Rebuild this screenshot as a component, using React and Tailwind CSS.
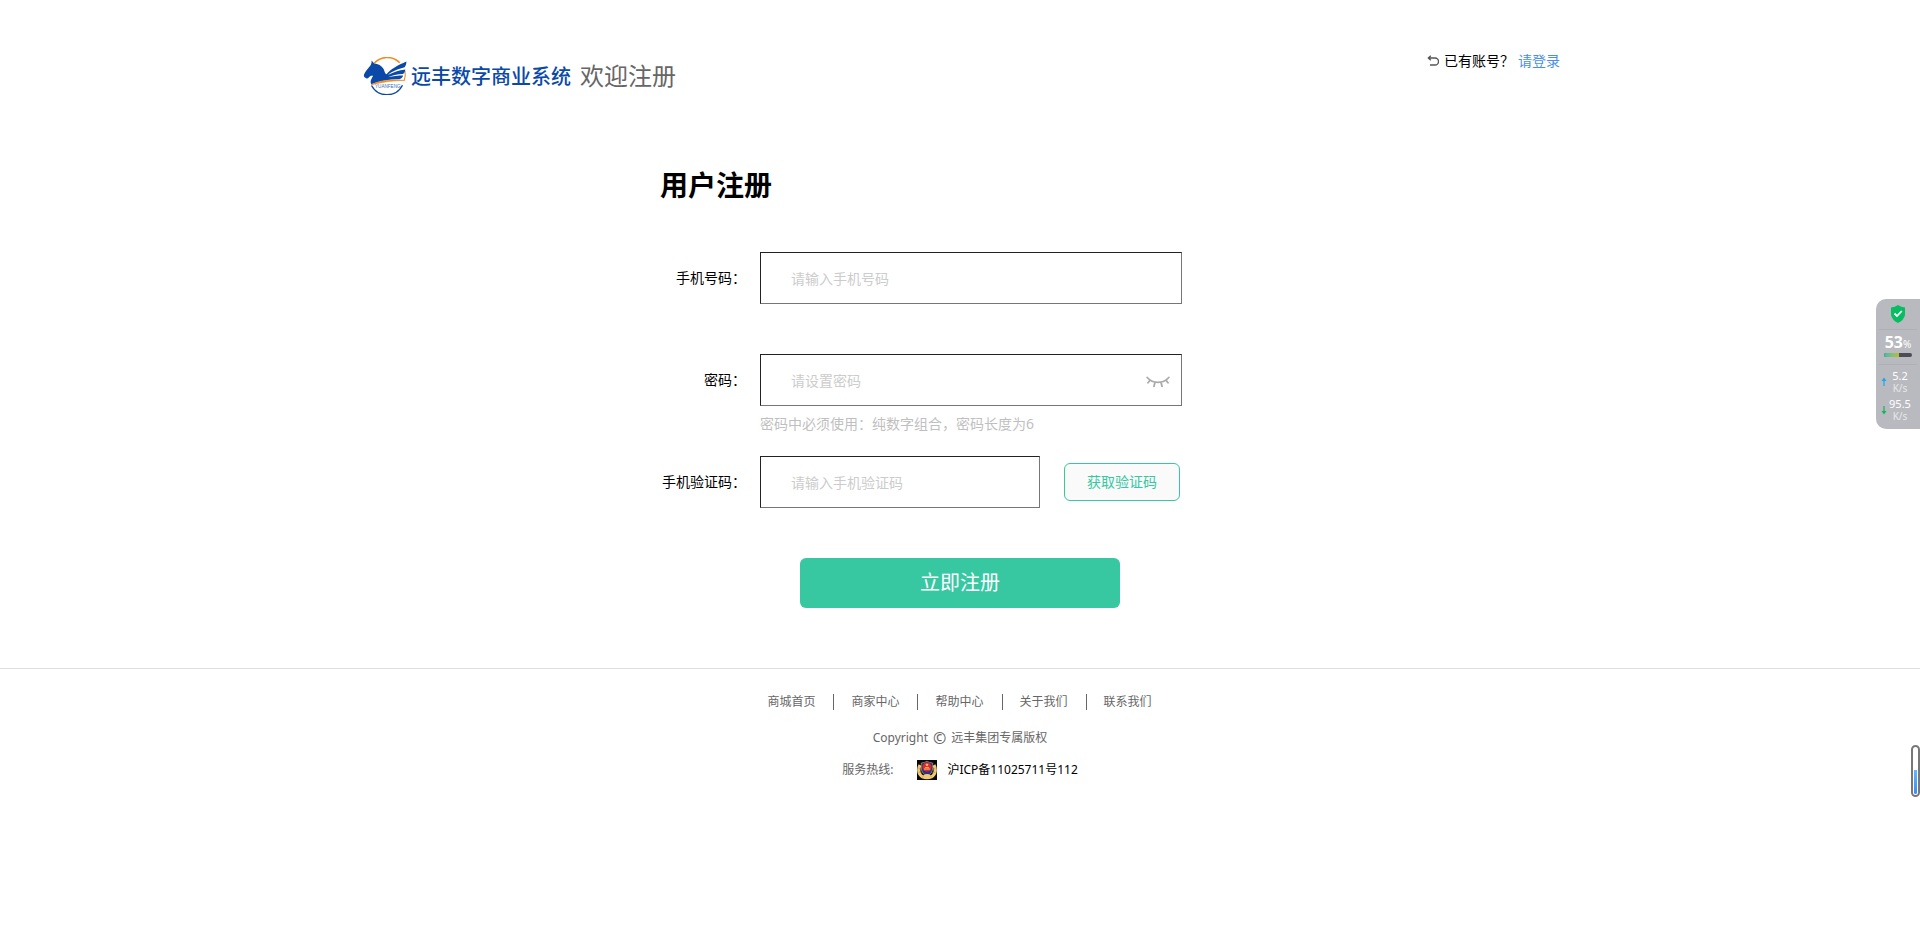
const links = ['商城首页', '商家中心', '帮助中心', '关于我们', '联系我们'];

const fieldStyle =
  'h-[52px] border border-t-[#222] border-l-[#222] border-r-[#767676] border-b-[#767676] bg-white pl-[30px] pr-3 text-sm text-black outline-none placeholder:text-[#ccc]';

function Logo() {
  return (
    <svg viewBox="0 0 44 38" className="h-[38px] w-11 shrink-0" role="img" aria-label="YUANFENG">
      <path d="M11.2 6.200A17.500 17.500 0 0 1 36.800 5.800" fill="none" stroke="#f08c1e" strokeWidth="1.4" />
      <path d="M42 14Q42.800 19 41.200 23.600" fill="none" stroke="#f08c1e" strokeWidth="1.1" />
      <path d="M8.500 28.500A17.500 17.500 0 0 0 39.500 28.200" fill="none" stroke="#0a49a8" strokeWidth="1.4" />
      <path
        d="M8.600 3.600L11.200 6.400C15 6.600 18.600 8.600 20.600 12C21.800 14.400 21.600 16.800 23.600 17.200C27 12 35 8.200 43.400 4.400C43.400 7 42.800 8.600 41.600 10.200C35 12 28.500 14.200 24.800 18C30 15.300 36 13 42.400 12.400C42 14.600 41.200 15.800 40 16.900C34 17.200 29 18.200 25 20.200C30 19 35 18.400 40.200 18.400C39.400 20.600 38 21.800 36.400 22.200C28 22 17 23.600 8.400 27.200C6.600 24.400 8.600 21.600 10.200 18.800C8.200 18.400 7 18.800 5.800 20.600C5 21.800 3.200 22 2.400 20.800C1.200 20.200 .6 18.800 1 17.400C2.600 14.600 4 12.400 6.400 9.800C7.600 8.600 8.800 6.800 8.600 3.600Z"
        fill="#0a49a8"
      />
      <path d="M8.200 27.800C17 23 29 22.400 41.400 23.400C31 23.600 20 24.600 8.200 27.800Z" fill="#f08c1e" stroke="#f08c1e" strokeWidth=".6" />
      <text x="12" y="31.200" fontSize="4.600" fontFamily="Liberation Sans, sans-serif" fill="#3a6fc0">YUANFENG</text>
    </svg>
  );
}

function ClosedEye() {
  return (
    <svg viewBox="0 0 24 12" className="h-3 w-6" fill="none" stroke="#aaa" strokeWidth="1.8" strokeLinecap="round" aria-hidden="true">
      <path d="M1.200 1.500C7 8 17 8 22.800 1.500M4 4.200L2 6.800M9 6.300L8 10.300M15 6.300L16 10.300M20 4.200L22 6.800" />
    </svg>
  );
}

function PoliceBadge() {
  return (
    <svg viewBox="0 0 20 20" className="h-5 w-5" aria-hidden="true">
      <rect width="20" height="20" fill="#080808" />
      <path d="M3 5C.8 9.500 1.500 14.500 5.500 16.800Q10 18.600 14.500 16.800C18.500 14.500 19.200 9.500 17 5" fill="none" stroke="#f2c877" strokeWidth="3.2" />
      <path d="M1.500 8L3.800 10M1.800 12L5 13M5 17.500L7 15.500M18.500 8L16.200 10M18.200 12L15 13M15 17.500L13 15.500" stroke="#b5812f" strokeWidth=".6" />
      <path d="M10 1.200L12.600 2.400L15.800 3C15.200 6 16.500 9.500 14.300 12.800Q12.500 15 10 15.600Q7.500 15 5.700 12.800C3.500 9.500 4.800 6 4.200 3L7.400 2.400Z" fill="#25368c" stroke="#f2c877" strokeWidth=".5" />
      <circle cx="10" cy="7" r="4.600" fill="#e0252b" />
      <path d="M10 2.800L10.500 4.200H12L10.800 5L11.200 6.400L10 5.600L8.800 6.400L9.200 5L8 4.200H9.500ZM7 8.600H13V9.600H7ZM8 7.200H12V8H8Z" fill="#f6ce62" />
      <path d="M6.500 15Q10 13 13.500 15L13 18H7Z" fill="#f2c877" />
    </svg>
  );
}

function Field({ id, label, children }) {
  return (
    <div className="flex items-center gap-[14px]">
      <label htmlFor={id} className="w-[86px] shrink-0 text-right text-sm whitespace-nowrap">{label}</label>
      {children}
    </div>
  );
}

function SpeedRow({ value, up }) {
  return (
    <div className="flex h-7 items-center">
      <svg viewBox="0 0 8 12" className="ml-1 h-3 w-2 shrink-0" aria-hidden="true">
        {up ? (
          <path d="M4 1.500L6.500 5H4.600V10H3.400V5H1.500Z" fill="#1fa5ee" />
        ) : (
          <path d="M4 10.500L6.500 7H4.600V2H3.400V7H1.500Z" fill="#12b45c" />
        )}
      </svg>
      <div className="flex-1 pr-2 text-center text-white">
        <div className="text-[11px] leading-3">{value}</div>
        <div className="text-[10px] leading-3 text-[#e6e7ea]">K/s</div>
      </div>
    </div>
  );
}

function Monitor() {
  return (
    <aside className="fixed top-[299px] right-0 flex h-[130px] w-11 flex-col rounded-l-[10px] bg-[#b9babf]">
      <div className="mx-[3px] flex h-[31px] items-center justify-center border-b border-[#afb0b5]">
        <svg viewBox="0 0 16 18" className="h-[18px] w-4" aria-hidden="true">
          <path d="M8 0Q11 2 15 2.500V10Q14 15 8 18Q2 15 1 10V2.500Q5 2 8 0Z" fill="#06bd61" />
          <path d="M4.500 8.500L7 11L11.800 6" fill="none" stroke="#fff" strokeWidth="1.800" />
        </svg>
      </div>
      <div className="mx-[3px] flex h-[35px] flex-col items-center border-b border-[#afb0b5] pt-[3px]">
        <div className="flex items-baseline leading-[18px] text-white">
          <span className="text-base leading-[18px] font-bold">53</span>
          <span className="text-[10px]">%</span>
        </div>
        <div className="h-1 w-7 overflow-hidden rounded-full bg-[#4b4c58]">
          <div className="h-1 bg-linear-to-r from-[#3ab9ae] to-[#b6bd22]" style={{ width: '53%' }} />
        </div>
      </div>
      <div className="pt-[3px]">
        <SpeedRow value="5.2" up />
        <SpeedRow value="95.5" />
      </div>
    </aside>
  );
}

export default function App() {
  return (
    <div className="bg-white font-['Noto_Sans','Noto_Sans_CJK_SC',sans-serif] text-black">
      <header className="mx-auto flex max-w-[1200px] items-start justify-between pt-[50px]">
        <div className="flex h-[52px] items-center pl-[3px]">
          <Logo />
          <span className="ml-1 font-['Noto_Sans_CJK_SC',sans-serif] text-xl font-medium text-[#0a49a8]">远丰数字商业系统</span>
          <h1 className="ml-[9px] text-2xl text-[#666]">欢迎注册</h1>
        </div>
        <div className="flex items-center text-sm leading-[22px]">
          <svg viewBox="0 0 12 12" className="mr-[5px] h-3 w-3" fill="none" stroke="#555" strokeWidth="1.300" aria-hidden="true">
            <path d="M1.500 3H8A3.500 3.500 0 0 1 8 10H3M3.800 .7L1.300 3L3.800 5.300" />
          </svg>
          <span>已有账号？</span>
          <a href="#login" className="ml-1 text-[#4a90e2]">请登录</a>
        </div>
      </header>

      <main className="mx-auto max-w-[600px] pt-[62px]">
        <h2 className="text-[28px] leading-[42px] font-bold">用户注册</h2>
        <form className="mt-[46px]" onSubmit={(e) => e.preventDefault()}>
          <Field id="phone" label="手机号码：">
            <input id="phone" type="tel" placeholder="请输入手机号码" className={`${fieldStyle} w-[422px]`} />
          </Field>
          <div className="mt-[50px]">
            <Field id="password" label="密码：">
              <div className="relative w-[422px]">
                <input id="password" type="password" placeholder="请设置密码" className={`${fieldStyle} w-full`} />
                <button type="button" aria-label="显示密码" className="absolute inset-y-0 right-3 flex items-center pt-1">
                  <ClosedEye />
                </button>
              </div>
            </Field>
            <p className="mt-2 ml-[100px] text-sm leading-5 text-[#bfbfbf]">密码中必须使用：纯数字组合，密码长度为6</p>
          </div>
          <div className="mt-[22px] flex items-center">
            <Field id="code" label="手机验证码：">
              <input id="code" type="text" placeholder="请输入手机验证码" className={`${fieldStyle} w-[280px]`} />
            </Field>
            <button type="button" className="ml-6 h-[38px] w-[116px] rounded-md border border-[#37c8a2] bg-[#fafafa] text-sm text-[#37c8a2]">
              获取验证码
            </button>
          </div>
          <button type="submit" className="mx-auto mt-[50px] block h-[50px] w-80 rounded-md bg-[#37c8a2] text-xl text-white">
            立即注册
          </button>
        </form>
      </main>

      <footer className="mt-[60px] flex flex-col items-center border-t border-[#ddd] pt-[25px] text-xs text-[#666]">
        <nav className="flex divide-x divide-[#666]">
          {links.map((name) => (
            <a key={name} href="#" className="pr-[18px] pl-[17px] leading-4">{name}</a>
          ))}
        </nav>
        <p className="mt-[18px] flex items-center gap-[5px] leading-5">
          <span>Copyright</span>
          <span className="text-base leading-5">©</span>
          <span>远丰集团专属版权</span>
        </p>
        <div className="mt-3 flex items-center leading-5">
          <span>服务热线:</span>
          <a href="#" className="ml-6 flex items-center gap-[10px] text-black">
            <PoliceBadge />
            <span>沪ICP备11025711号112</span>
          </a>
        </div>
      </footer>

      <Monitor />
      <div className="fixed top-[745px] right-0 flex h-[52px] w-[9px] items-end rounded-full border-2 border-[#777] bg-white p-px" aria-hidden="true">
        <div className="w-full rounded-b-full bg-linear-to-b from-[#62b8ff] to-[#3d8bf5]" style={{ height: '52%' }} />
      </div>
    </div>
  );
}
